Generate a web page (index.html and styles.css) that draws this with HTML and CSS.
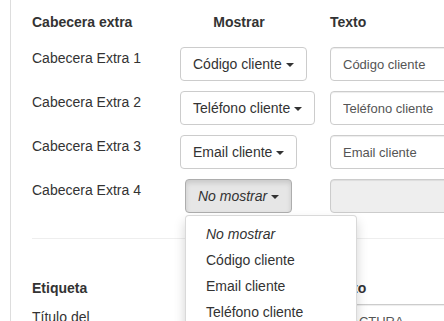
FILE: index.html
```html
<!DOCTYPE html>
<html lang="es">
<head>
  <meta charset="UTF-8">
  <meta name="viewport" content="width=device-width, initial-scale=1.0">
  <title>Cabeceras extra</title>
  <link rel="stylesheet" href="styles.css">
</head>
<body>
  <div class="panel">
    <div class="fila cabecera">
      <div>Cabecera extra</div>
      <div class="centro">Mostrar</div>
      <div>Texto</div>
    </div>

    <div class="fila">
      <label>Cabecera Extra 1</label>
      <div><button type="button" class="btn">Código cliente <span class="caret"></span></button></div>
      <div><input type="text" class="campo" value="Código cliente"></div>
    </div>

    <div class="fila">
      <label>Cabecera Extra 2</label>
      <div><button type="button" class="btn">Teléfono cliente <span class="caret"></span></button></div>
      <div><input type="text" class="campo" value="Teléfono cliente"></div>
    </div>

    <div class="fila">
      <label>Cabecera Extra 3</label>
      <div><button type="button" class="btn">Email cliente <span class="caret"></span></button></div>
      <div><input type="text" class="campo" value="Email cliente"></div>
    </div>

    <div class="fila">
      <label>Cabecera Extra 4</label>
      <div>
        <div class="desplegable">
          <button type="button" class="btn activo"><em>No mostrar</em> <span class="caret"></span></button>
          <ul class="menu">
            <li><a href="#"><em>No mostrar</em></a></li>
            <li><a href="#">Código cliente</a></li>
            <li><a href="#">Email cliente</a></li>
            <li><a href="#">Teléfono cliente</a></li>
          </ul>
        </div>
      </div>
      <div><input type="text" class="campo" disabled></div>
    </div>

    <hr>

    <div class="fila cabecera etiquetas">
      <div>Etiqueta</div>
      <div></div>
      <div>Texto</div>
    </div>

    <div class="fila seccion2">
      <label>Título del documento</label>
      <div></div>
      <div><input type="text" class="campo" value="FACTURA"></div>
    </div>
  </div>
</body>
</html>
```

FILE: styles.css
```css
html, body { overflow: hidden; }
body { margin: 0; font-family: "Liberation Sans", Arial, sans-serif; font-size: 14px; line-height: 20px; color: #333; background: #fff; }

.panel { width: 640px; margin-left: 10px; padding: 12px 0 0 21px; border-left: 1px solid #ddd; min-height: 400px; }

.fila { display: grid; grid-template-columns: 148px 150px 1fr; margin-bottom: 10px; }
.fila label { padding-top: 1px; }
.cabecera { font-weight: bold; margin-bottom: 15px; }
.centro { text-align: center; padding-right: 32px; }

.btn { font-family: inherit; font-size: 14px; line-height: 20px; color: #333; background: #fff; border: 1px solid #ccc; border-radius: 4px; padding: 6px 12px; cursor: pointer; }
.btn.activo { background: #e6e6e6; border-color: #adadad; box-shadow: inset 0 3px 5px rgba(0,0,0,.125); }
.caret { display: inline-block; width: 0; height: 0; vertical-align: middle; border-top: 4px solid #333; border-left: 4px solid transparent; border-right: 4px solid transparent; }

.campo { box-sizing: border-box; width: 100%; height: 34px; padding: 6px 12px; font-family: inherit; font-size: 13px; color: #555; background: #fff; border: 1px solid #ccc; border-radius: 4px; box-shadow: inset 0 1px 1px rgba(0,0,0,.075); }
.campo:disabled { background: #eee; }

.desplegable { position: relative; display: inline-block; margin-left: 5px; }
.menu { position: absolute; top: 100%; left: 0; z-index: 10; width: 170px; margin: 2px 0 0; padding: 5px 0; list-style: none; background: #fff; border: 1px solid rgba(0,0,0,.15); border-radius: 4px; box-shadow: 0 6px 12px rgba(0,0,0,.175); }
.menu a { display: block; padding: 3px 20px; color: #333; text-decoration: none; }

hr { margin: 25px 0 39px; border: 0; border-top: 1px solid #eee; }
.etiquetas { margin-bottom: 6px; }
.seccion2 label { padding: 3px 30px 0 0; }
```
